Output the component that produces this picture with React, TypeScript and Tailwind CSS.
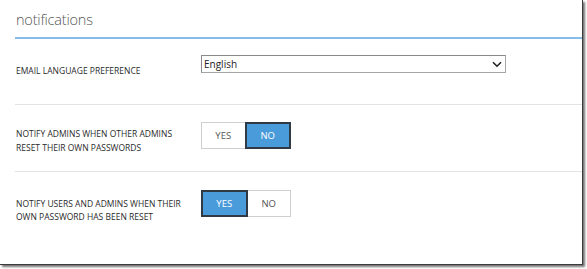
import React, { useState } from 'react';

const font = { fontFamily: '"Open Sans", "Noto Sans", Arial, sans-serif' };

function Toggle({ value, onChange }: { value: boolean; onChange: (v: boolean) => void }) {
  const seg = (on: boolean) =>
    on
      ? 'bg-[#4a9bda] text-white border-2 border-[#2f3a45]'
      : 'bg-white text-[#555] border border-[#cfcfcf]';
  return (
    <div className="flex h-[27px] w-[90px] text-[9.5px] leading-none">
      <button
        onClick={() => onChange(true)}
        className={`flex-1 flex items-center justify-center ${seg(value)} ${value ? '' : 'border-r-0'}`}
      >
        YES
      </button>
      <button
        onClick={() => onChange(false)}
        className={`flex-1 flex items-center justify-center ${seg(!value)} ${!value ? '' : 'border-l-0'}`}
      >
        NO
      </button>
    </div>
  );
}

export default function App() {
  const [notifyAdmins, setNotifyAdmins] = useState(false);
  const [notifyUsers, setNotifyUsers] = useState(true);

  return (
    <div className="w-[587px] h-[269px] bg-white" style={font}>
      <div className="w-[583px] h-[265px] bg-white border-r border-b border-[#3c3c3c] shadow-[2px_2px_2px_rgba(0,0,0,0.55)] pl-[15px]">
        {/* Header */}
        <div className="h-[39px] border-b-2 border-[#86bdea] pl-[1px] pt-[10px]">
          <h1 className="text-[14.5px] font-light tracking-[-0.2px] text-[#555] leading-[20px]">notifications</h1>
        </div>

        {/* Email language */}
        <div className="flex h-[66px] border-b border-[#e3e3e3]">
          <div className="w-[186px] pl-[1px] pt-[25px] text-[8.5px] leading-[13px] text-[#2a2a2a]">
            EMAIL LANGUAGE PREFERENCE
          </div>
          <div className="pt-[16px]">
            <div className="flex items-center justify-between w-[305px] h-[18px] border border-[#a5a5a5] border-t-[#8a8a8a] border-l-[#8a8a8a] px-[2px] text-[10px] text-[#222]">
              <span>English</span>
              <svg width="10" height="7" viewBox="0 0 10 7" className="mr-[1px]">
                <path d="M1 1.2 L5 5.2 L9 1.2" fill="none" stroke="#222" strokeWidth="1.6" />
              </svg>
            </div>
          </div>
        </div>

        {/* Notify admins */}
        <div className="flex h-[67px] border-b border-[#e3e3e3]">
          <div className="w-[186px] pl-[1px] pt-[22px] text-[8.5px] leading-[13.5px] text-[#2a2a2a]">
            NOTIFY ADMINS WHEN OTHER ADMINS
            <br />
            RESET THEIR OWN PASSWORDS
          </div>
          <div className="pt-[17px]">
            <Toggle value={notifyAdmins} onChange={setNotifyAdmins} />
          </div>
        </div>

        {/* Notify users */}
        <div className="flex">
          <div className="w-[186px] pl-[1px] pt-[25px] text-[8.5px] leading-[13px] text-[#2a2a2a]">
            NOTIFY USERS AND ADMINS WHEN THEIR
            <br />
            OWN PASSWORD HAS BEEN RESET
          </div>
          <div className="pt-[18px]">
            <Toggle value={notifyUsers} onChange={setNotifyUsers} />
          </div>
        </div>
      </div>
    </div>
  );
}
